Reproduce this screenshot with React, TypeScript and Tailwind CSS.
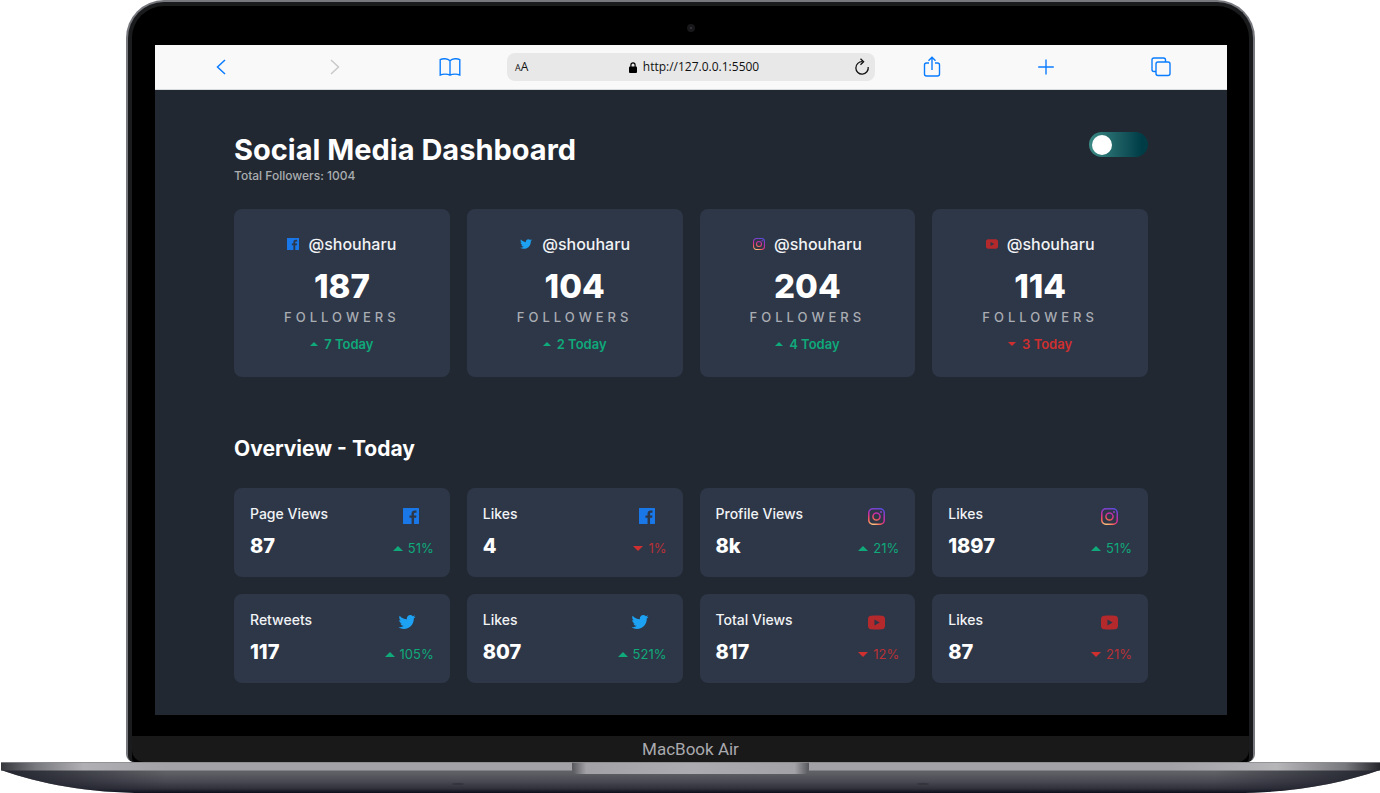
import { useId, useState } from "react";
import { RiTwitterFill } from "react-icons/ri";

type Network = "facebook" | "twitter" | "instagram" | "youtube";

function FacebookIcon({ className }: { className: string }) {
  return (
    <svg viewBox="0 0 20 20" className={className} fill="#1a77e8" aria-hidden="true">
      <path d="M19.4 0H.6C.3 0 0 .3 0 .6v18.8c0 .3.3.6.6.6h10.084v-7.745H8.076V9.237h2.606V7.01c0-2.583 1.578-3.99 3.883-3.99 1.104 0 2.052.082 2.329.119v2.7h-1.598c-1.254 0-1.496.597-1.496 1.47v1.928h2.989l-.39 3.018h-2.6V20h5.6c.3 0 .6-.3.6-.6V.6c0-.3-.3-.6-.6-.6z" />
    </svg>
  );
}

function InstagramIcon({ className }: { className: string }) {
  const id = useId();
  const paint = `url(#${id})`;
  return (
    <svg viewBox="0 0 20 20" className={className} fill="none" aria-hidden="true">
      <defs>
        <radialGradient id={id} gradientUnits="userSpaceOnUse" cx="5.5" cy="21.5" r="23">
          <stop offset="0" stopColor="#fdd78a" />
          <stop offset="0.15" stopColor="#fbb176" />
          <stop offset="0.42" stopColor="#f4585a" />
          <stop offset="0.65" stopColor="#cf2aa0" />
          <stop offset="1" stopColor="#5a4be0" />
        </radialGradient>
      </defs>
      <rect x="0.9" y="0.9" width="18.2" height="18.2" rx="4.8" stroke={paint} strokeWidth="1.8" />
      <circle cx="10" cy="10" r="4.2" stroke={paint} strokeWidth="1.8" />
      <circle cx="15.3" cy="4.7" r="1.2" fill={paint} />
    </svg>
  );
}

function YoutubeIcon({ className }: { className: string }) {
  return (
    <svg viewBox="0 0 20 20" className={className} fill="#b3292c" aria-hidden="true">
      <path
        fillRule="evenodd"
        d="M3.6 2.2C7.8 1.8 12.2 1.8 16.4 2.2C18.9 2.4 20 3.7 20 6V14C20 16.3 18.9 17.6 16.4 17.8C12.2 18.2 7.8 18.2 3.6 17.8C1.1 17.6 0 16.3 0 14V6C0 3.7 1.1 2.4 3.6 2.2ZM7.6 6.5V13.5L13.8 10Z"
      />
    </svg>
  );
}

function NetworkIcon({ network, small = false }: { network: Network; small?: boolean }) {
  if (network === "facebook") return <FacebookIcon className={small ? "size-3" : "size-4"} />;
  if (network === "twitter")
    return <RiTwitterFill className={small ? "size-[14px] text-[#1da1f2]" : "size-5 text-[#1da1f2]"} aria-hidden="true" />;
  if (network === "instagram") return <InstagramIcon className={small ? "size-3" : "size-[17px]"} />;
  return <YoutubeIcon className={small ? "size-3" : "size-[17px]"} />;
}

function Triangle({ up, className }: { up: boolean; className: string }) {
  return (
    <svg viewBox="0 0 10 5" className={className} fill={up ? "#0fa97a" : "#cf2f2f"} aria-hidden="true">
      <path d={up ? "M0 5L5 0L10 5Z" : "M0 0L5 5L10 0Z"} />
    </svg>
  );
}

const followers: { network: Network; count: string; change: string; up: boolean }[] = [
  { network: "facebook", count: "187", change: "7 Today", up: true },
  { network: "twitter", count: "104", change: "2 Today", up: true },
  { network: "instagram", count: "204", change: "4 Today", up: true },
  { network: "youtube", count: "114", change: "3 Today", up: false },
];

const overview: { label: string; network: Network; value: string; change: string; up: boolean }[] = [
  { label: "Page Views", network: "facebook", value: "87", change: "51%", up: true },
  { label: "Likes", network: "facebook", value: "4", change: "1%", up: false },
  { label: "Profile Views", network: "instagram", value: "8k", change: "21%", up: true },
  { label: "Likes", network: "instagram", value: "1897", change: "51%", up: true },
  { label: "Retweets", network: "twitter", value: "117", change: "105%", up: true },
  { label: "Likes", network: "twitter", value: "807", change: "521%", up: true },
  { label: "Total Views", network: "youtube", value: "817", change: "12%", up: false },
  { label: "Likes", network: "youtube", value: "87", change: "21%", up: false },
];

function BrowserBar() {
  const [url, setUrl] = useState("http://127.0.0.1:5500");
  return (
    <div className="grid grid-cols-[1fr_1fr_1fr_368px_1fr_1fr_1fr] items-center justify-items-center border-b border-[#d8dcde] bg-[#f9f9f9] px-[9px] py-2 text-[#0a7cff]">
      <button type="button" aria-label="Back">
        <svg viewBox="0 0 24 24" className="size-6" fill="none" stroke="currentColor" strokeWidth="1.5">
          <path d="M16 5L8.5 12L16 19" />
        </svg>
      </button>
      <button type="button" aria-label="Forward" className="text-[#c9c9c9]">
        <svg viewBox="0 0 24 24" className="size-6" fill="none" stroke="currentColor" strokeWidth="1.5">
          <path d="M8 5L15.5 12L8 19" />
        </svg>
      </button>
      <button type="button" aria-label="Bookmarks">
        <svg viewBox="0 0 24 24" className="size-6" fill="none" stroke="currentColor" strokeWidth="1.4">
          <path d="M12 5.8C9.5 3.3 4.8 3.3 2.2 4.6V20C4.8 18.8 9.5 18.8 12 20.2C14.5 18.8 19.2 18.8 21.8 20V4.6C19.2 3.3 14.5 3.3 12 5.8V20.2" />
        </svg>
      </button>
      <div className="grid w-full grid-cols-[1fr_auto_1fr] items-center rounded-lg bg-[#e8e8e8] px-2 py-1 text-[#111111]">
        <button type="button" aria-label="Text size" className="justify-self-start font-['Open_Sans',sans-serif] text-xs">
          <span className="text-[9px]">A</span>A
        </button>
        <div className="flex items-center gap-[6px] pl-[6px]">
          <svg viewBox="0 0 8 11" className="h-[11px] w-2" aria-hidden="true">
            <rect y="4.5" width="8" height="6.5" rx="1" fill="#000" />
            <path d="M1.9 5V3a2.1 2.1 0 0 1 4.2 0V5" fill="none" stroke="#000" strokeWidth="1.2" />
          </svg>
          <input
            type="text"
            aria-label="Address"
            value={url}
            onChange={(event) => setUrl(event.target.value)}
            className="field-sizing-content bg-transparent font-['Open_Sans',sans-serif] text-xs leading-5 outline-none"
          />
        </div>
        <button type="button" aria-label="Reload" className="justify-self-end">
          <svg viewBox="0 0 18 18" className="-mr-1 size-[18px]" fill="none" stroke="#111" strokeWidth="1.3">
            <path d="M9.5 3.7A6.2 6.2 0 1 0 15.2 9" />
            <path d="M7.5 .8L10.6 3.8L7.5 6.8" />
          </svg>
        </button>
      </div>
      <button type="button" aria-label="Share">
        <svg viewBox="0 0 24 24" className="size-6" fill="none" stroke="currentColor" strokeWidth="1.4">
          <path d="M9 8H6.5A2 2 0 0 0 4.5 10V19A2 2 0 0 0 6.5 21H17.5A2 2 0 0 0 19.5 19V10A2 2 0 0 0 17.5 8H15" />
          <path d="M12 15V2.5M8.5 5.8L12 2.3L15.5 5.8" />
        </svg>
      </button>
      <button type="button" aria-label="New tab">
        <svg viewBox="0 0 24 24" className="size-6" fill="none" stroke="currentColor" strokeWidth="1.4">
          <path d="M12 4.5V19.5M4.2 12H19.8" />
        </svg>
      </button>
      <button type="button" aria-label="Tabs">
        <svg viewBox="0 0 24 24" className="size-6" fill="none" stroke="currentColor" strokeWidth="1.4">
          <rect x="7" y="7" width="14" height="13.5" rx="2" />
          <path d="M7 16.5H5A2 2 0 0 1 3 14.5V5A2 2 0 0 1 5 3H14.5A2 2 0 0 1 16.5 5V7" />
        </svg>
      </button>
    </div>
  );
}

function Dashboard() {
  return (
    <main className="bg-[#222831] px-[79px] pt-[42px] pb-8 font-[Inter,sans-serif] text-white">
      <header className="flex items-start justify-between">
        <div>
          <h1 className="text-[29px] leading-9 font-bold">Social Media Dashboard</h1>
          <p className="text-xs leading-4 font-medium text-[#aaadb0]">Total Followers: 1004</p>
        </div>
        <label className="flex h-[25px] w-[59px] cursor-pointer items-center rounded-full bg-linear-to-r from-[#3b8a86] to-[#003c46] to-90% px-[3px]">
          <input type="checkbox" aria-label="Light theme" className="peer sr-only" />
          <span className="size-5 rounded-full bg-white peer-checked:ml-auto" />
        </label>
      </header>

      <section aria-label="Followers" className="mt-[25px] grid grid-cols-4 gap-[17px]">
        {followers.map((item) => (
          <article key={item.network} className="flex flex-col items-center rounded-lg bg-[#2d3748] pt-[23px] pb-[23px]">
            <div className="flex items-center gap-[9px]">
              <NetworkIcon network={item.network} small />
              <span className="text-base leading-6 font-medium text-[#f2f3f5]">@shouharu</span>
            </div>
            <p className="mt-[10px] text-[33px] leading-10 font-extrabold">{item.count}</p>
            <p className="mt-px text-[13px] leading-5 font-medium tracking-[4px] text-[#aaadb3] uppercase">Followers</p>
            <p className={item.up ? "mt-[7px] flex items-center gap-[6px] text-[13px] leading-5 font-semibold text-[#0fa97a]" : "mt-[7px] flex items-center gap-[6px] text-[13px] leading-5 font-semibold text-[#cf2f2f]"}>
              <Triangle up={item.up} className="h-1 w-2" />
              {item.change}
            </p>
          </article>
        ))}
      </section>

      <h2 className="mt-[58px] text-[21px] leading-7 font-bold">Overview - Today</h2>

      <section aria-label="Overview" className="mt-[25px] grid grid-cols-4 gap-[17px]">
        {overview.map((item) => (
          <article key={item.label + item.network} className="flex justify-between rounded-lg bg-[#2d3748] px-4 pt-4 pb-[17px]">
            <div className="flex flex-col gap-2">
              <h3 className="text-sm leading-5 font-medium text-[#f2f3f5]">{item.label}</h3>
              <p className="text-xl leading-7 font-extrabold">{item.value}</p>
            </div>
            <div className="flex flex-col items-center gap-2">
              <div className="mr-[5px] flex h-6 items-center">
                <NetworkIcon network={item.network} />
              </div>
              <p className={item.up ? "flex items-center gap-[5px] text-[13px] leading-6 text-[#0fa97a]" : "flex items-center gap-[5px] text-[13px] leading-6 text-[#b93136]"}>
                <Triangle up={item.up} className="h-[5px] w-[10px]" />
                {item.change}
              </p>
            </div>
          </article>
        ))}
      </section>
    </main>
  );
}

function LaptopBase() {
  return (
    <svg viewBox="0 0 1380 31" preserveAspectRatio="none" className="block h-[31px] w-full" aria-hidden="true">
      <defs>
        <linearGradient id="deck" x1="0" x2="1" y1="0" y2="0">
          <stop offset="0" stopColor="#36373c" />
          <stop offset="0.025" stopColor="#77787d" />
          <stop offset="0.06" stopColor="#b0b0b4" />
          <stop offset="0.12" stopColor="#a2a2a7" />
          <stop offset="0.85" stopColor="#a2a2a7" />
          <stop offset="0.925" stopColor="#b6b6b9" />
          <stop offset="0.975" stopColor="#77787d" />
          <stop offset="1" stopColor="#25262c" />
        </linearGradient>
        <linearGradient id="under" x1="0" x2="0" y1="0" y2="1">
          <stop offset="0" stopColor="#626368" />
          <stop offset="0.18" stopColor="#5c5d62" />
          <stop offset="0.5" stopColor="#484953" />
          <stop offset="0.8" stopColor="#30313b" />
          <stop offset="1" stopColor="#0d101b" />
        </linearGradient>
        <linearGradient id="ends" x1="0" x2="1" y1="0" y2="0">
          <stop offset="0" stopColor="#1c1e29" stopOpacity="0.9" />
          <stop offset="0.12" stopColor="#1c1e29" stopOpacity="0" />
          <stop offset="0.88" stopColor="#1c1e29" stopOpacity="0" />
          <stop offset="1" stopColor="#1c1e29" stopOpacity="0.9" />
        </linearGradient>
        <linearGradient id="notch" x1="0" x2="1" y1="0" y2="0">
          <stop offset="0" stopColor="#56575c" />
          <stop offset="0.06" stopColor="#a2a2a7" />
          <stop offset="0.5" stopColor="#acacb0" />
          <stop offset="0.94" stopColor="#a2a2a7" />
          <stop offset="1" stopColor="#56575c" />
        </linearGradient>
      </defs>
      <path d="M1 8H1380C1340 22 1290 31 1235 31H145C90 31 40 22 1 8Z" fill="url(#under)" />
      <path d="M1 8H1380C1340 22 1290 31 1235 31H145C90 31 40 22 1 8Z" fill="url(#ends)" />
      <rect x="1" width="1379" height="8.5" fill="url(#deck)" />
      <path d="M572 0H809V7Q809 12 803 12H578Q572 12 572 7Z" fill="url(#notch)" />
      <rect x="1" width="1379" height="1" fill="#8b8c90" opacity="0.8" />
      <ellipse cx="458" cy="22" rx="6" ry="1" fill="#33343c" />
      <ellipse cx="923" cy="22" rx="6" ry="1" fill="#33343c" />
    </svg>
  );
}

export default function App() {
  return (
    <div className="min-h-screen bg-white">
      <div className="mr-[125px] ml-[126px] rounded-t-[38px] rounded-b-lg bg-[#77787e] px-[2px] pt-[2px]">
        <div className="overflow-hidden rounded-t-[36px] rounded-b-[6px] border-x-4 border-t-4 border-[#1a1b1c] bg-black">
          <div className="flex h-[39px] items-center justify-center">
            <span className="mt-[9px] mb-1 flex size-[8px] items-center justify-center rounded-full bg-[#18181b]">
              <span className="size-[2px] rounded-full bg-[#3a3a42]" />
            </span>
          </div>
          <div className="pr-[22px] pb-[21px] pl-[23px]">
            <BrowserBar />
            <Dashboard />
          </div>
          <p className="rounded-b-xl bg-[#191919] text-center font-[Roboto,sans-serif] text-[17px] leading-[26px] text-[#a9a9ae]">
            MacBook Air
          </p>
        </div>
      </div>
      <LaptopBase />
    </div>
  );
}
